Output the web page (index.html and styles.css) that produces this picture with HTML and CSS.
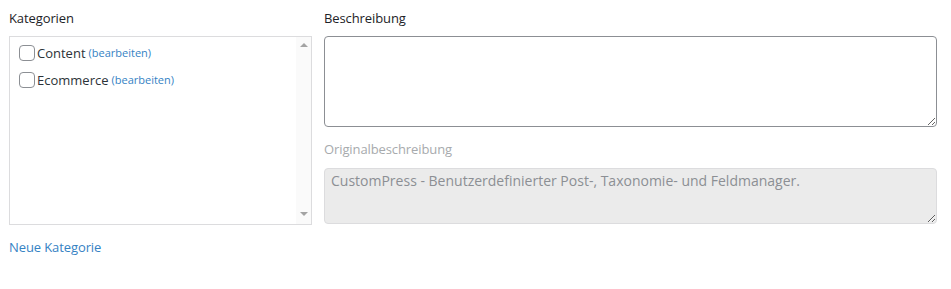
FILE: index.html
```html
<!DOCTYPE html>
<html lang="de">
<head>
    <meta charset="UTF-8">
    <meta name="viewport" content="width=device-width, initial-scale=1.0">
    <title>Kategorien</title>
    <link rel="stylesheet" href="styles.css">
</head>
<body>
    <div class="wrap">
        <div class="col-cats">
            <label class="field-label">Kategorien</label>
            <div class="cat-box">
                <ul class="cat-list">
                    <li>
                        <label><input type="checkbox" name="cat[]" value="content"> Content</label>
                        <a href="#" class="edit-link">(bearbeiten)</a>
                    </li>
                    <li>
                        <label><input type="checkbox" name="cat[]" value="ecommerce"> Ecommerce</label>
                        <a href="#" class="edit-link">(bearbeiten)</a>
                    </li>
                </ul>
                <div class="scrollbar">
                    <span class="arrow up"></span>
                    <span class="arrow down"></span>
                </div>
            </div>
            <a href="#" class="new-cat">Neue Kategorie</a>
        </div>

        <div class="col-desc">
            <label class="field-label" for="desc">Beschreibung</label>
            <textarea id="desc" class="desc-input"></textarea>

            <label class="field-label muted">Originalbeschreibung</label>
            <textarea class="desc-input orig" disabled>CustomPress - Benutzerdefinierter Post-, Taxonomie- und Feldmanager.</textarea>
        </div>
    </div>
</body>
</html>
```

FILE: styles.css
```css
* {
    box-sizing: border-box;
}

body {
    margin: 0;
    font-family: "Open Sans", "Noto Sans", sans-serif;
    font-size: 13px;
    color: #1d2327;
    background: #fff;
}

.wrap {
    display: flex;
    gap: 12px;
    padding: 9px 14px 0 9px;
}

.col-cats {
    width: 303px;
    flex-shrink: 0;
}

.col-desc {
    flex: 1;
    display: flex;
    flex-direction: column;
}

.field-label {
    display: block;
    line-height: 18px;
    margin-bottom: 9px;
    letter-spacing: -0.1px;
}

.field-label.muted {
    color: #a7aaad;
    margin-top: 13px;
    margin-bottom: 10px;
}

.cat-box {
    height: 189px;
    border: 1px solid #dcdcde;
    overflow: hidden;
    background: #fff;
    display: flex;
}

.cat-list {
    flex: 1;
    list-style: none;
    margin: 0;
    padding: 7px 0 0 9px;
}

.cat-list li {
    display: flex;
    align-items: center;
    height: 17px;
    margin-bottom: 10px;
    white-space: nowrap;
}

.cat-list label {
    display: flex;
    align-items: center;
    font-size: 13px;
    color: #2c3338;
}

.cat-list input[type=checkbox] {
    appearance: none;
    width: 16px;
    height: 16px;
    margin: 0 2px 0 0;
    border: 1px solid #8c8f94;
    border-radius: 4px;
    background: #fff;
}

.edit-link {
    font-size: 11px;
    color: #3582c4;
    text-decoration: none;
    margin-left: 3px;
}

.scrollbar {
    width: 15px;
    background: #fafafa;
    display: flex;
    flex-direction: column;
    justify-content: space-between;
    align-items: center;
    padding: 6px 0 8px;
}

.arrow {
    width: 0;
    height: 0;
    border-left: 4px solid transparent;
    border-right: 4px solid transparent;
}

.arrow.up {
    border-bottom: 4px solid #a3a3a3;
}

.arrow.down {
    border-top: 4px solid #a3a3a3;
}

.new-cat {
    display: inline-block;
    margin-top: 13px;
    color: #3582c4;
    text-decoration: none;
    font-size: 13px;
    letter-spacing: -0.1px;
}

.desc-input {
    display: block;
    width: 100%;
    height: 91px;
    padding: 6px 8px;
    border: 1px solid #8c8f94;
    border-radius: 4px;
    font-family: inherit;
    font-size: 14px;
    color: #2c3338;
    background: #fff;
    resize: vertical;
}

.desc-input.orig {
    height: 56px;
    border-color: #dcdcde;
    background: #ebebeb;
    color: #8c8f94;
    padding: 2px 6px;
}
```
